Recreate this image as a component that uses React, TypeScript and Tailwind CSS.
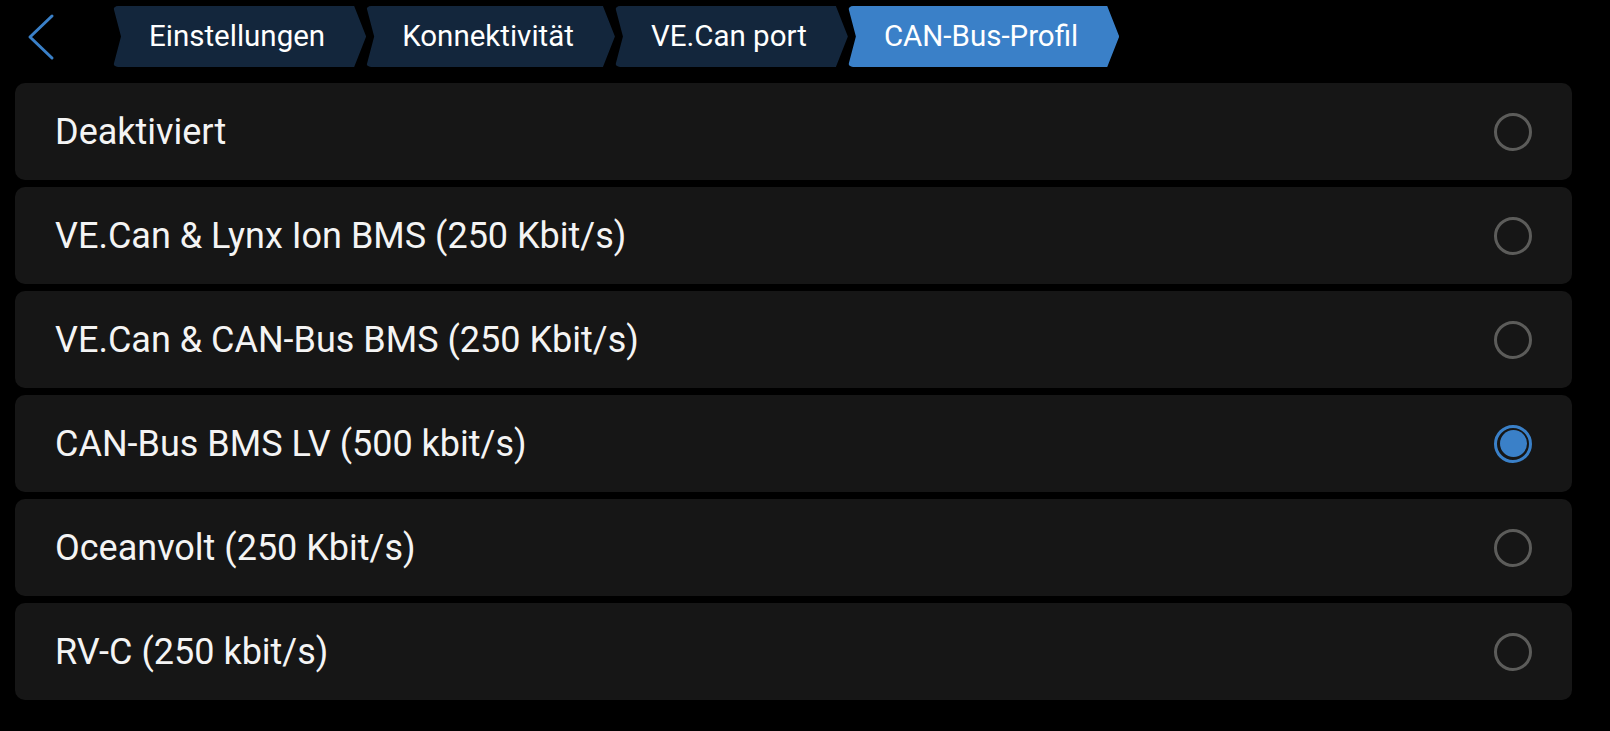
import React from 'react';

const crumbs = ['Einstellungen', 'Konnektivität', 'VE.Can port', 'CAN-Bus-Profil'];

const options = [
    'Deaktiviert',
    'VE.Can & Lynx Ion BMS (250 Kbit/s)',
    'VE.Can & CAN-Bus BMS (250 Kbit/s)',
    'CAN-Bus BMS LV (500 kbit/s)',
    'Oceanvolt (250 Kbit/s)',
    'RV-C (250 kbit/s)',
];

const SELECTED = 3;

const Radio = ({ checked }: { checked: boolean }) =>
    checked ? (
        <span className="flex h-[38px] w-[38px] items-center justify-center rounded-full border-[3px] border-[#3a80c8]">
            <span className="h-[27px] w-[27px] rounded-full bg-[#3a80c8]" />
        </span>
    ) : (
        <span className="h-[38px] w-[38px] rounded-full border-[3px] border-[#5c5c5a]" />
    );

export default function App() {
    return (
        <div className="h-[731px] w-[1610px] overflow-hidden bg-black font-['Roboto','Liberation_Sans',sans-serif] text-white">
            {/* Header: back button + breadcrumbs */}
            <div className="mt-[6px] flex h-[61px] items-center">
                <button className="flex h-[61px] w-[113px] items-center pl-[27px]">
                    <svg width="28" height="48" viewBox="0 0 28 48" fill="none">
                        <path
                            d="M25 3 L3 24 L25 45"
                            stroke="#3a80c8"
                            strokeWidth="3"
                            strokeLinecap="round"
                            strokeLinejoin="round"
                        />
                    </svg>
                </button>
                <div className="flex h-full items-stretch">
                    {crumbs.map((c, i) => (
                        <div
                            key={c}
                            className={`flex items-center rounded-l-[5px] pr-[41px] pl-9 text-[29.5px] [clip-path:polygon(0_0,calc(100%_-_12px)_0,100%_50%,calc(100%_-_12px)_100%,0_100%,8px_50%)] ${
                                i === crumbs.length - 1 ? 'bg-[#3a80c8]' : 'bg-[#13263c]'
                            }`}
                        >
                            {c}
                        </div>
                    ))}
                </div>
            </div>

            {/* Option list */}
            <div className="mt-4 ml-[15px] flex w-[1557px] flex-col gap-[7px]">
                {options.map((o, i) => (
                    <div
                        key={o}
                        className="flex h-[97px] items-center justify-between rounded-[10px] bg-[#161616] px-[40px]"
                    >
                        <span className="text-[36px] text-[#f4f4f4]">{o}</span>
                        <Radio checked={i === SELECTED} />
                    </div>
                ))}
            </div>
        </div>
    );
}
